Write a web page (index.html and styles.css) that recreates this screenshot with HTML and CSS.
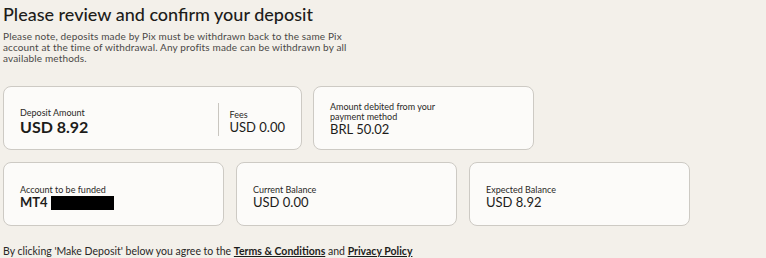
FILE: index.html
```html
<!DOCTYPE html>
<html>
<head>
  <title>Confirm deposit</title>
  <link rel="stylesheet" href="styles.css">
</head>
<body>
  <div class="page">
    <h1>Please review and confirm your deposit</h1>
    <p class="note">Please note, deposits made by Pix must be withdrawn back to the same Pix<br>account at the time of withdrawal. Any profits made can be withdrawn by all<br>available methods.</p>

    <div class="row first-row">
      <div class="card wide">
        <div class="split">
          <div class="item">
            <div class="label">Deposit Amount</div>
            <div class="value big">USD 8.92</div>
          </div>
          <div class="divider"></div>
          <div class="item fees">
            <div class="label">Fees</div>
            <div class="value">USD 0.00</div>
          </div>
        </div>
      </div>
      <div class="card debit">
        <div class="label narrow">Amount debited from your payment method</div>
        <div class="value">BRL 50.02</div>
      </div>
    </div>

    <div class="row">
      <div class="card">
        <div class="label">Account to be funded</div>
        <div class="value bold">MT4 <span class="redacted"></span></div>
      </div>
      <div class="card">
        <div class="label">Current Balance</div>
        <div class="value">USD 0.00</div>
      </div>
      <div class="card">
        <div class="label">Expected Balance</div>
        <div class="value">USD 8.92</div>
      </div>
    </div>

    <p class="terms">By clicking 'Make Deposit' below you agree to the <a href="#">Terms &amp; Conditions</a> and <a href="#">Privacy Policy</a></p>
  </div>
</body>
</html>
```

FILE: styles.css
```css
body {
  margin: 0;
  background: #f3f0ea;
  font-family: "Lato", "Noto Sans", sans-serif;
  color: #1d1c1a;
}

.page {
  padding: 2px 3px;
}

h1 {
  margin: 0;
  font-size: 18px;
  font-weight: 500;
  line-height: 24px;
}

.note {
  margin: 5px 0 0;
  font-size: 10px;
  line-height: 11px;
  letter-spacing: 0.15px;
  color: #4a4846;
}

.row {
  display: flex;
  gap: 12px;
  margin-top: 12px;
}

.first-row {
  margin-top: 22px;
  gap: 11px;
}

.card {
  box-sizing: border-box;
  width: 221px;
  height: 64px;
  padding: 0 16px 15px;
  background: #fcfbf9;
  border: 1px solid #cdcac4;
  border-radius: 8px;
  display: flex;
  flex-direction: column;
  justify-content: flex-end;
}

.card.wide {
  width: 299px;
  padding-bottom: 13px;
}

.card.debit {
  padding-bottom: 12px;
}

.split {
  display: flex;
  align-items: flex-end;
}

.split .item {
  display: flex;
  flex-direction: column;
  white-space: nowrap;
}

.split .item:first-child {
  width: 202px;
}

.split .fees {
  padding-bottom: 1px;
}

.divider {
  width: 1px;
  height: 33px;
  margin-right: 10px;
  background: #c9c6c0;
}

.label {
  font-size: 9px;
  line-height: 10px;
  color: #2a2826;
}

.label.narrow {
  width: 110px;
}

.value {
  font-size: 13px;
  line-height: 15px;
}

.value.big {
  font-size: 16px;
  font-weight: 700;
  line-height: 18px;
}

.value.bold {
  font-weight: 700;
  display: flex;
  align-items: center;
  gap: 3px;
}

.redacted {
  display: inline-block;
  width: 63px;
  height: 14px;
  background: #000;
}

.terms {
  margin: 19px 0 0;
  font-size: 10.5px;
  line-height: 13px;
  color: #2a2826;
}

.terms a {
  color: #1d1c1a;
  font-weight: 700;
}
```
